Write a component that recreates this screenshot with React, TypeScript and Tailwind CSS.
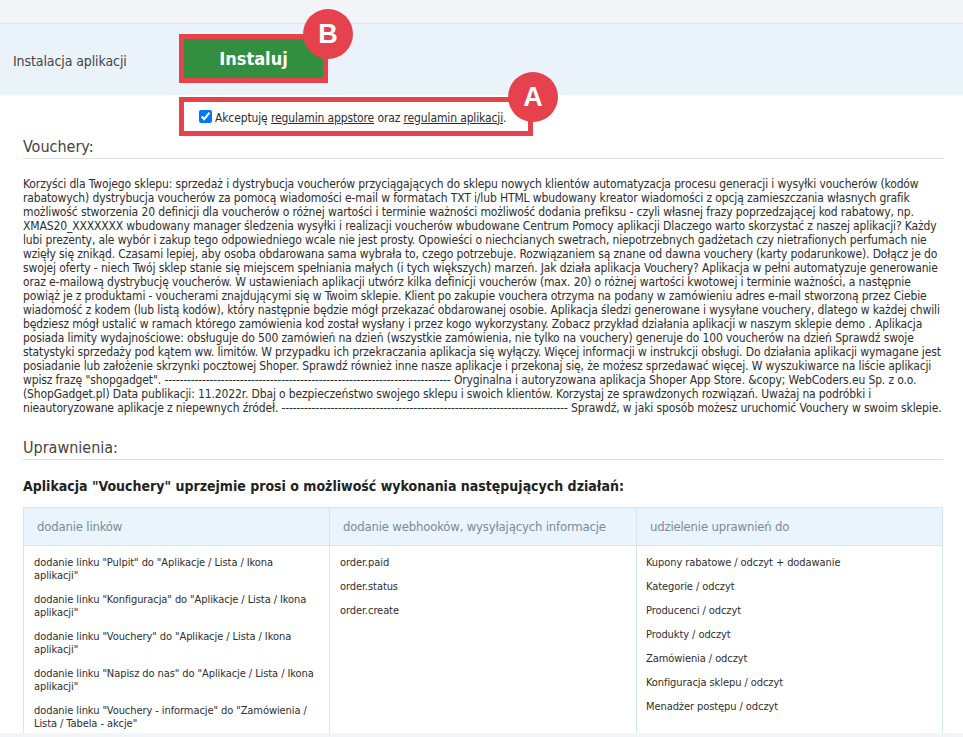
import React from "react";

const dashes = "-".repeat(76);

const description = [
  "Korzyści dla Twojego sklepu: sprzedaż i dystrybucja voucherów przyciągających do sklepu nowych klientów automatyzacja procesu generacji i wysyłki voucherów (kodów",
  "rabatowych) dystrybucja voucherów za pomocą wiadomości e-mail w formatach TXT i/lub HTML wbudowany kreator wiadomości z opcją zamieszczania własnych grafik",
  "możliwość stworzenia 20 definicji dla voucherów o różnej wartości i terminie ważności możliwość dodania prefiksu - czyli własnej frazy poprzedzającej kod rabatowy, np.",
  "XMAS20_XXXXXXX wbudowany manager śledzenia wysyłki i realizacji voucherów wbudowane Centrum Pomocy aplikacji Dlaczego warto skorzystać z naszej aplikacji? Każdy",
  "lubi prezenty, ale wybór i zakup tego odpowiedniego wcale nie jest prosty. Opowieści o niechcianych swetrach, niepotrzebnych gadżetach czy nietrafionych perfumach nie",
  "wzięły się znikąd. Czasami lepiej, aby osoba obdarowana sama wybrała to, czego potrzebuje. Rozwiązaniem są znane od dawna vouchery (karty podarunkowe). Dołącz je do",
  "swojej oferty - niech Twój sklep stanie się miejscem spełniania małych (i tych większych) marzeń. Jak działa aplikacja Vouchery? Aplikacja w pełni automatyzuje generowanie",
  "oraz e-mailową dystrybucję voucherów. W ustawieniach aplikacji utwórz kilka definicji voucherów (max. 20) o różnej wartości kwotowej i terminie ważności, a następnie",
  "powiąż je z produktami - voucherami znajdującymi się w Twoim sklepie. Klient po zakupie vouchera otrzyma na podany w zamówieniu adres e-mail stworzoną przez Ciebie",
  "wiadomość z kodem (lub listą kodów), który następnie będzie mógł przekazać obdarowanej osobie. Aplikacja śledzi generowane i wysyłane vouchery, dlatego w każdej chwili",
  "będziesz mógł ustalić w ramach którego zamówienia kod został wysłany i przez kogo wykorzystany. Zobacz przykład działania aplikacji w naszym sklepie demo . Aplikacja",
  "posiada limity wydajnościowe: obsługuje do 500 zamówień na dzień (wszystkie zamówienia, nie tylko na vouchery) generuje do 100 voucherów na dzień Sprawdź swoje",
  "statystyki sprzedaży pod kątem ww. limitów. W przypadku ich przekraczania aplikacja się wyłączy. Więcej informacji w instrukcji obsługi. Do działania aplikacji wymagane jest",
  "posiadanie lub założenie skrzynki pocztowej Shoper. Sprawdź również inne nasze aplikacje i przekonaj się, że możesz sprzedawać więcej. W wyszukiwarce na liście aplikacji",
  `wpisz frazę "shopgadget". ${dashes} Oryginalna i autoryzowana aplikacja Shoper App Store. &copy; WebCoders.eu Sp. z o.o.`,
  "(ShopGadget.pl) Data publikacji: 11.2022r. Dbaj o bezpieczeństwo swojego sklepu i swoich klientów. Korzystaj ze sprawdzonych rozwiązań. Uważaj na podróbki i",
  `nieautoryzowane aplikacje z niepewnych źródeł. ${dashes} Sprawdź, w jaki sposób możesz uruchomić Vouchery w swoim sklepie.`,
];

const links = [
  ['dodanie linku "Pulpit" do "Aplikacje / Lista / Ikona', 'aplikacji"'],
  ['dodanie linku "Konfiguracja" do "Aplikacje / Lista / Ikona', 'aplikacji"'],
  ['dodanie linku "Vouchery" do "Aplikacje / Lista / Ikona', 'aplikacji"'],
  ['dodanie linku "Napisz do nas" do "Aplikacje / Lista / Ikona', 'aplikacji"'],
  ['dodanie linku "Vouchery - informacje" do "Zamówienia /', 'Lista / Tabela - akcje"'],
];

const webhooks = ["order.paid", "order.status", "order.create"];

const permissions = [
  "Kupony rabatowe / odczyt + dodawanie",
  "Kategorie / odczyt",
  "Producenci / odczyt",
  "Produkty / odczyt",
  "Zamówienia / odczyt",
  "Konfiguracja sklepu / odczyt",
  "Menadżer postępu / odczyt",
];

function Badge({ letter, className }: { letter: string; className: string }) {
  return (
    <div
      className={`absolute w-[50px] h-[50px] rounded-full bg-[#e5424d] text-white flex items-center justify-center font-bold text-[27px] tracking-normal font-['Liberation_Sans',sans-serif] ${className}`}
    >
      {letter}
    </div>
  );
}

function SectionTitle({ children }: { children: React.ReactNode }) {
  return (
    <h2 className="ml-[23px] mr-[20px] h-[22px] leading-[20px] text-[16px] tracking-normal text-[#444] border-b border-[#dcdfe3]">
      {children}
    </h2>
  );
}

function HeaderCell({ children, className = "" }: { children: React.ReactNode; className?: string }) {
  return (
    <div className={`h-[38px] pl-[13px] flex items-center text-[13px] tracking-[-0.18px] text-[#7c8a99] bg-[#e9f4fd] border-b border-[#d3e4f3] ${className}`}>
      {children}
    </div>
  );
}

function App() {
  return (
    <div className="w-[963px] h-[737px] overflow-hidden flex flex-col bg-white text-[#2e2e2e] text-[12px] tracking-[-0.13px] font-['DejaVu_Sans_Condensed','DejaVu_Sans',sans-serif]">
      <div className="h-[24px] shrink-0 bg-[#f2f4f8] border-b border-[#e3e6ea]" />

      <div className="relative h-[71px] shrink-0 bg-[#ebf3fa] flex items-center pl-[13px]">
        <span className="w-[166px] text-[14px] tracking-[-0.1px] text-[#444] pt-[4px]">Instalacja aplikacji</span>
        <div className="border-[5px] border-[#e5424d] mb-[2px]">
          <button className="w-[139px] h-[39px] bg-[#318f3f] text-white font-bold text-[18px] tracking-normal flex items-center justify-center">
            Instaluj
          </button>
        </div>
        <Badge letter="B" className="left-[303px] top-[-15px]" />
      </div>

      <div className="relative h-[42px] shrink-0 pt-[2px] pl-[179px]">
        <label className="w-[354px] h-[39px] border-[5px] border-[#e5424d] flex items-center pl-[15px] gap-[3px] text-[12px]">
          <input type="checkbox" defaultChecked className="w-[13px] h-[13px] accent-[#0075ff] m-0" />
          <span className="pt-[2px]">
            Akceptuję <span className="underline">regulamin appstore</span> oraz{" "}
            <span className="underline">regulamin aplikacji</span>.
          </span>
        </label>
        <Badge letter="A" className="left-[508px] top-[-23px]" />
      </div>

      <div className="flex-1 min-h-0 overflow-hidden">
        <SectionTitle>Vouchery:</SectionTitle>

        <div className="mx-[23px] mt-[18px] leading-[14px]">
          {description.map((line) => (
            <div key={line} className="whitespace-nowrap">
              {line}
            </div>
          ))}
        </div>

        <div className="mt-[23px]">
          <SectionTitle>Uprawnienia:</SectionTitle>
        </div>

        <h3 className="mx-[23px] mt-[16px] font-bold text-[14px] tracking-normal leading-[20px] text-[#222]">
          Aplikacja "Vouchery" uprzejmie prosi o możliwość wykonania następujących działań:
        </h3>

        <div className="ml-[23px] mr-[20px] mt-[11px] border border-b-0 border-[#d3e4f3] grid grid-cols-[306px_307px_1fr] h-[300px] content-start">
          <HeaderCell className="border-r">dodanie linków</HeaderCell>
          <HeaderCell className="border-r">dodanie webhooków, wysyłających informacje</HeaderCell>
          <HeaderCell>udzielenie uprawnień do</HeaderCell>

          <div className="border-r border-[#d3e4f3] h-[260px] pl-[10px] pt-[10px] flex flex-col gap-[11px] leading-[13px] text-[11px] tracking-[-0.08px]">
            {links.map((link) => (
              <div key={link[0]} className="whitespace-nowrap">
                {link[0]}
                <br />
                {link[1]}
              </div>
            ))}
          </div>
          <div className="border-r border-[#d3e4f3] h-[260px] pl-[10px] pt-[10px] flex flex-col gap-[11px] leading-[13px] text-[11px] tracking-[-0.08px]">
            {webhooks.map((hook) => (
              <div key={hook}>{hook}</div>
            ))}
          </div>
          <div className="h-[260px] pl-[9px] pt-[10px] flex flex-col gap-[11px] leading-[13px] text-[11px] tracking-[-0.08px]">
            {permissions.map((perm) => (
              <div key={perm}>{perm}</div>
            ))}
          </div>
        </div>
      </div>

      <div className="h-[4px] shrink-0 bg-[#f2f4f8]" />
    </div>
  );
}

export default App;
